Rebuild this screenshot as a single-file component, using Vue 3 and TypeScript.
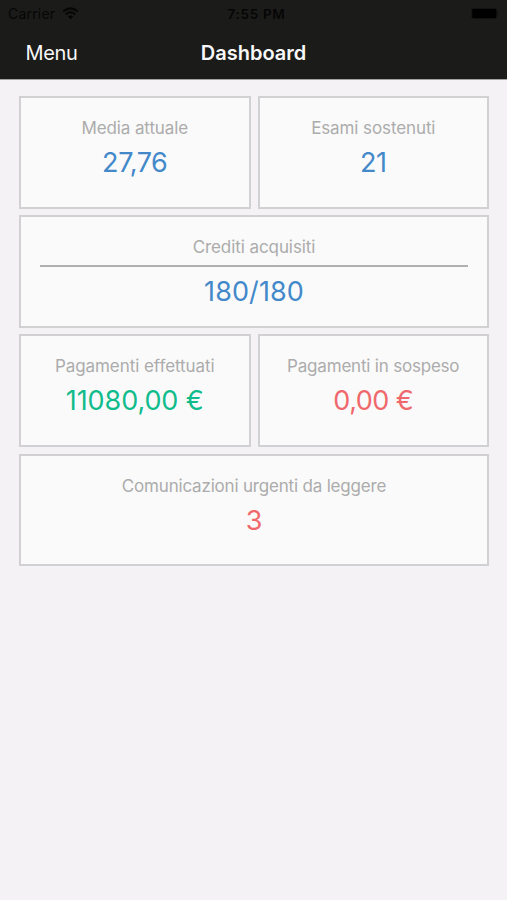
<script setup lang="ts">
interface Card {
  label: string
  value: string
  tone: 'blue' | 'green' | 'red'
  labelTracking: number
  valueTracking: number
  wide?: boolean
  divider?: boolean
}

const cards: Card[] = [
  { label: 'Media attuale', value: '27,76', tone: 'blue', labelTracking: -0.1, valueTracking: -0.4 },
  { label: 'Esami sostenuti', value: '21', tone: 'blue', labelTracking: -0.1, valueTracking: -0.5 },
  { label: 'Crediti acquisiti', value: '180/180', tone: 'blue', labelTracking: -0.08, valueTracking: 0.1, wide: true, divider: true },
  { label: 'Pagamenti effettuati', value: '11080,00 €', tone: 'green', labelTracking: -0.06, valueTracking: -0.1 },
  { label: 'Pagamenti in sospeso', value: '0,00 €', tone: 'red', labelTracking: -0.2, valueTracking: -0.55 },
  { label: 'Comunicazioni urgenti da leggere', value: '3', tone: 'red', labelTracking: -0.19, valueTracking: 0, wide: true },
]
</script>

<template>
  <main class="screen">
    <header class="top">
      <div class="status">
        <div class="carrier">
          <span>Carrier</span>
          <svg width="17" height="13" viewBox="0 0 17 13" aria-hidden="true">
            <path d="M1.2 4.6Q8.5-1.8 15.8 4.6M3.7 7.4Q8.5 3.2 13.3 7.4" fill="none" stroke="currentColor" stroke-width="2" />
            <path d="M5.8 9.5Q8.5 7.3 11.2 9.5L8.5 12.3Z" fill="currentColor" />
          </svg>
        </div>
        <span class="time">7:55 PM</span>
        <svg class="battery" width="28" height="11" viewBox="0 0 28 11" aria-hidden="true">
          <rect x="0.3" y="0.3" width="25.4" height="10.4" rx="2" fill="#10100f" />
          <rect x="1.3" y="1.1" width="24" height="8.8" rx="1" fill="#000" />
          <path d="M26.5 3.5Q28 5.5 26.5 7.5Z" fill="#10100f" />
        </svg>
      </div>
      <nav class="nav">
        <span class="menu">Menu</span>
        <h1>Dashboard</h1>
      </nav>
    </header>
    <section class="grid">
      <article v-for="card in cards" :key="card.label" class="card" :class="{ wide: card.wide }">
        <div class="label" :style="{ letterSpacing: card.labelTracking + 'px' }">{{ card.label }}</div>
        <div v-if="card.divider" class="divider"></div>
        <div class="value" :class="card.tone" :style="{ letterSpacing: card.valueTracking + 'px' }">{{ card.value }}</div>
      </article>
    </section>
  </main>
</template>

<style>
body { background: #f4f2f5; }
</style>

<style scoped>
.screen { min-height: 900px; background: #f4f2f5; font-family: Inter, "Liberation Sans", sans-serif; }
.top { height: 80px; box-sizing: border-box; background: #1b1b19; border-bottom: 1px solid #a2a2a1; }
.status { height: 27px; display: grid; grid-template-columns: 1fr auto 1fr; align-items: center; padding: 0 8px; color: #060606; font-size: 14px; }
.carrier { display: flex; align-items: center; gap: 7px; letter-spacing: 0.2px; }
.time { font-size: 13.5px; font-weight: 600; letter-spacing: 0.7px; padding-left: 6px; }
.battery { justify-self: end; }
.nav { height: 52px; display: grid; grid-template-columns: 1fr auto 1fr; align-items: center; padding: 0 25.6px; color: #f8f8f8; font-size: 20px; }
.menu { letter-spacing: -0.4px; }
h1 { margin: 0; font-size: 20px; font-weight: 600; }
.grid { display: grid; grid-template-columns: 1fr 1fr; gap: 6.7px 7px; padding: 16px 18px 0 19px; }
.card { height: 112.5px; box-sizing: border-box; border: 2px solid #d1d1d3; background: #fafafa; padding: 19px 19px 0; text-align: center; }
.wide { grid-column: 1 / -1; }
.label { font-size: 17px; line-height: 22px; color: #acacac; white-space: nowrap; }
.value { font-size: 27px; line-height: 34px; margin-top: 7px; white-space: nowrap; }
.divider { height: 2px; background: #b0b0b0; margin-top: 7px; }
.divider + .value { margin-top: 8px; }
.blue { color: #4389ca; }
.green { color: #10bc8c; }
.red { color: #ef686b; }
</style>
